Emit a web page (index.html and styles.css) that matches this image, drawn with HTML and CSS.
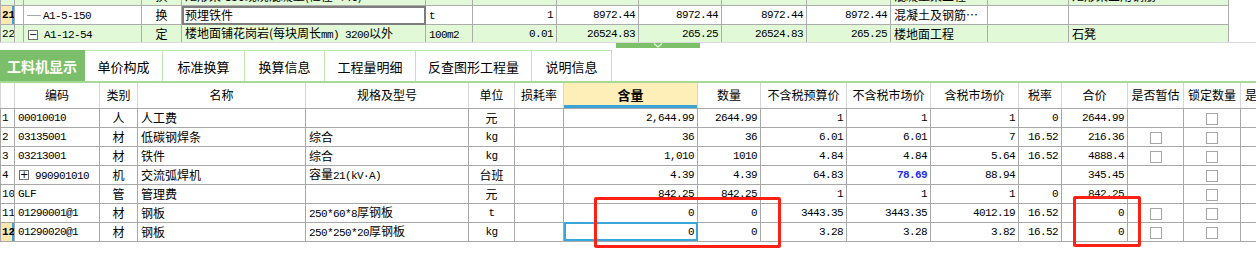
FILE: index.html
```html
<!DOCTYPE html>
<html lang="zh-CN">
<head>
    <meta charset="UTF-8">
    <title>工料机显示</title>
    <link rel="stylesheet" href="styles.css">
</head>
<body>
<div class="page">
    <div class="top-grid">
        <table class="grid top">
            <colgroup>
                <col style="width:14px"><col style="width:9px"><col style="width:118px"><col style="width:40px">
                <col style="width:244px"><col style="width:47px"><col style="width:84px"><col style="width:82px">
                <col style="width:83px"><col style="width:85px"><col style="width:84px"><col style="width:97px">
                <col style="width:81px"><col style="width:160px">
            </colgroup>
            <tr class="green">
                <td class="no">20</td><td></td><td class="code"><span class="n">A1-5-144</span></td><td class="c">换</td>
                <td>矩形梁 C30现浇混凝土(粒径≤40)</td><td><span class="n">10m3</span></td>
                <td class="r n">0.1</td><td class="r n">3882.90</td><td class="r n">388.29</td><td class="r n">3882.90</td><td class="r n">388.29</td>
                <td>混凝土梁工程</td><td></td><td>矩形梁三用钢筋</td>
            </tr>
            <tr>
                <td class="no cur">21</td><td></td><td class="code"><span class="tline"></span><span class="n">A1-5-150</span></td><td class="c">换</td>
                <td class="edit">预埋铁件</td><td><span class="n">t</span></td>
                <td class="r n">1</td><td class="r n">8972.44</td><td class="r n">8972.44</td><td class="r n">8972.44</td><td class="r n">8972.44</td>
                <td>混凝土及钢筋…</td><td></td><td></td>
            </tr>
            <tr class="green">
                <td class="no">22</td><td></td><td class="code"><span class="tbox">−</span><span class="n">A1-12-54</span></td><td class="c">定</td>
                <td>楼地面铺花岗岩(每块周长<span class="n">mm) 3200</span>以外</td><td><span class="n">100m2</span></td>
                <td class="r n">0.01</td><td class="r n">26524.83</td><td class="r n">265.25</td><td class="r n">26524.83</td><td class="r n">265.25</td>
                <td>楼地面工程</td><td></td><td>石凳</td>
            </tr>
        </table>
    </div>

    <div class="split">
        <div class="handle">
            <svg width="10" height="5" viewBox="0 0 10 5"><path d="M1 0.5 L5 4 L9 0.5" fill="none" stroke="#e8f5e2" stroke-width="1.2"/></svg>
        </div>
    </div>

    <div class="tabs">
        <div class="tab active" style="width:85px">工料机显示</div>
        <div class="tab" style="width:78px">单价构成</div>
        <div class="tab" style="width:82px">标准换算</div>
        <div class="tab" style="width:80px">换算信息</div>
        <div class="tab" style="width:91px">工程量明细</div>
        <div class="tab" style="width:116px">反查图形工程量</div>
        <div class="tab" style="width:80px">说明信息</div>
    </div>

    <div class="bottom-grid">
        <table class="grid bottom">
            <colgroup>
                <col style="width:14px"><col style="width:85px"><col style="width:38px"><col style="width:168px">
                <col style="width:163px"><col style="width:46px"><col style="width:49px"><col style="width:134px">
                <col style="width:63px"><col style="width:86px"><col style="width:84px"><col style="width:88px">
                <col style="width:43px"><col style="width:66px"><col style="width:56px"><col style="width:57px">
                <col style="width:40px">
            </colgroup>
            <tr class="head">
                <th></th><th>编码</th><th>类别</th><th>名称</th><th>规格及型号</th><th>单位</th><th>损耗率</th>
                <th class="sel">含量</th><th>数量</th><th>不含税预算价</th><th>不含税市场价</th><th>含税市场价</th>
                <th>税率</th><th>合价</th><th>是否暂估</th><th>锁定数量</th><th class="cut">是否</th>
            </tr>
            <tr>
                <td class="no">1</td><td class="n">00010010</td><td class="c">人</td><td>人工费</td><td></td><td class="c">元</td><td></td>
                <td class="r n">2,644.99</td><td class="r n">2644.99</td><td class="r n">1</td><td class="r n">1</td><td class="r n">1</td>
                <td class="r n">0</td><td class="r n">2644.99</td><td></td><td class="c"><span class="chk"></span></td><td></td>
            </tr>
            <tr>
                <td class="no">2</td><td class="n">03135001</td><td class="c">材</td><td>低碳钢焊条</td><td>综合</td><td class="c n">kg</td><td></td>
                <td class="r n">36</td><td class="r n">36</td><td class="r n">6.01</td><td class="r n">6.01</td><td class="r n">7</td>
                <td class="r n">16.52</td><td class="r n">216.36</td><td class="c"><span class="chk"></span></td><td class="c"><span class="chk"></span></td><td></td>
            </tr>
            <tr>
                <td class="no">3</td><td class="n">03213001</td><td class="c">材</td><td>铁件</td><td>综合</td><td class="c n">kg</td><td></td>
                <td class="r n">1,010</td><td class="r n">1010</td><td class="r n">4.84</td><td class="r n">4.84</td><td class="r n">5.64</td>
                <td class="r n">16.52</td><td class="r n">4888.4</td><td class="c"><span class="chk"></span></td><td class="c"><span class="chk"></span></td><td></td>
            </tr>
            <tr>
                <td class="no">4</td><td><span class="tbox">+</span><span class="n">990901010</span></td><td class="c">机</td><td>交流弧焊机</td><td>容量<span class="n">21(kV·A)</span></td><td class="c">台班</td><td></td>
                <td class="r n">4.39</td><td class="r n">4.39</td><td class="r n">64.83</td><td class="r n price">78.69</td><td class="r n">88.94</td>
                <td></td><td class="r n">345.45</td><td></td><td class="c"><span class="chk"></span></td><td></td>
            </tr>
            <tr>
                <td class="no">10</td><td class="n">GLF</td><td class="c">管</td><td>管理费</td><td></td><td class="c">元</td><td></td>
                <td class="r n">842.25</td><td class="r n">842.25</td><td class="r n">1</td><td class="r n">1</td><td class="r n">1</td>
                <td class="r n">0</td><td class="r n">842.25</td><td></td><td class="c"><span class="chk"></span></td><td></td>
            </tr>
            <tr>
                <td class="no">11</td><td class="n">01290001@1</td><td class="c">材</td><td>钢板</td><td><span class="n">250*60*8</span>厚钢板</td><td class="c n">t</td><td></td>
                <td class="r n">0</td><td class="r n">0</td><td class="r n">3443.35</td><td class="r n">3443.35</td><td class="r n">4012.19</td>
                <td class="r n">16.52</td><td class="r n">0</td><td class="c"><span class="chk"></span></td><td class="c"><span class="chk"></span></td><td></td>
            </tr>
            <tr>
                <td class="no cur">12</td><td class="n">01290020@1</td><td class="c">材</td><td>钢板</td><td><span class="n">250*250*20</span>厚钢板</td><td class="c n">kg</td><td></td>
                <td class="r n focus">0</td><td class="r n">0</td><td class="r n">3.28</td><td class="r n">3.28</td><td class="r n">3.82</td>
                <td class="r n">16.52</td><td class="r n">0</td><td class="c"><span class="chk"></span></td><td class="c"><span class="chk"></span></td><td></td>
            </tr>
        </table>
    </div>

    <div class="mark mark-qty"></div>
    <div class="mark mark-sum"></div>
</div>
</body>
</html>
```

FILE: styles.css
```css
* { box-sizing: border-box; }
body {
    margin: 0;
    background: #fff;
    font-family: "Noto Sans CJK SC", "Noto Sans", sans-serif;
    font-size: 12px;
    color: #000;
}
.page {
    position: relative;
    width: 1256px;
    height: 258px;
    overflow: hidden;
}

/* grids */
.grid {
    border-collapse: collapse;
    table-layout: fixed;
}
.grid td, .grid th {
    padding: 0 3px;
    white-space: nowrap;
    overflow: hidden;
    line-height: 16px;
    height: 19px;
}
.grid tr { height: 19px; }
.n {
    font-family: "Liberation Mono", monospace;
    font-size: 11px;
    letter-spacing: -0.6px;
}
.c { text-align: center; }
.r { text-align: right; }

.top-grid {
    height: 42px;
    overflow: hidden;
}
.grid.top {
    width: 1228px;
    margin-top: -14px;
}
.grid.top td {
    border: 1px solid #acacac;
}
.grid.top tr.green td { background: #e1f9d6; }
.grid.top td.no {
    background: #fff;
    padding: 0 1px;
    font-family: "Liberation Mono", monospace;
    font-size: 11px;
}
.grid td.no.cur {
    background: #fde7ae;
    font-weight: bold;
    box-shadow: inset -2px 0 0 #3ba3e0;
}
.grid.top td.edit {
    outline: 2px solid #7d7d7d;
    outline-offset: -2px;
}
.code { padding-left: 3px; }
.tline {
    display: inline-block;
    width: 14px;
    height: 1px;
    background: #a8a8a8;
    vertical-align: middle;
    margin-right: 2px;
}
.tbox {
    display: inline-block;
    width: 10px;
    height: 10px;
    border: 1px solid #6e6e6e;
    background: #fff;
    line-height: 7px;
    text-align: center;
    font-family: "DejaVu Sans", sans-serif;
    font-size: 10px;
    vertical-align: middle;
    margin: 0 6px 0 1px;
}

/* splitter */
.split {
    height: 8px;
    border-top: 1px solid #dadada;
}
.handle {
    margin-left: 616px;
    width: 84px;
    height: 5px;
    background: #7cc06a;
    display: flex;
    justify-content: center;
    align-items: flex-start;
}

/* tabs */
.tabs {
    display: flex;
    height: 33px;
    border-bottom: 2px solid #a6d896;
}
.tab {
    border-top: 1px solid #bfe5b1;
    border-right: 1px solid #bfe5b1;
    display: flex;
    align-items: center;
    justify-content: center;
    font-size: 13px;
    height: 31px;
}
.tab.active {
    background: #7cbf6a;
    color: #fff;
    font-weight: bold;
    font-size: 14px;
    border-color: #7cbf6a;
}

/* bottom grid */
.bottom-grid {
    width: 1256px;
    overflow: hidden;
}
.grid.bottom {
    width: 1280px;
}
.grid.bottom tr.head { height: 25px; }
.grid.bottom th {
    font-weight: normal;
    height: 25px;
    border-left: 1px solid #d6d6d6;
    border-right: 1px solid #d6d6d6;
    border-bottom: 1px solid #a8a8a8;
    background: #fff;
    text-align: center;
    padding: 0;
}
.grid.bottom th.sel {
    background: #feefb9;
    font-weight: bold;
    font-size: 13px;
    box-shadow: inset 0 -3px 0 #3ba3d8;
}
.grid.bottom th.cut { text-align: left; padding-left: 4px; }
.grid.bottom td {
    border: 1px solid #a8a8a8;
}
.grid.bottom td.no {
    padding: 0 1px;
    font-family: "Liberation Mono", monospace;
    font-size: 11px;
}
.grid.bottom td.focus {
    outline: 2px solid #3aa7dc;
    outline-offset: -2px;
}
.price {
    color: #1e2ee8;
    font-weight: bold;
}
.chk {
    display: inline-block;
    width: 12px;
    height: 12px;
    border: 1px solid #a6a6a6;
    background: #fff;
    vertical-align: middle;
}

/* annotation marks */
.mark {
    position: absolute;
    border: 3px solid #ff2114;
    border-radius: 2px;
}
.mark-qty { left: 594px; top: 197px; width: 187px; height: 51px; }
.mark-sum { left: 1073px; top: 196px; width: 68px; height: 51px; }
```
